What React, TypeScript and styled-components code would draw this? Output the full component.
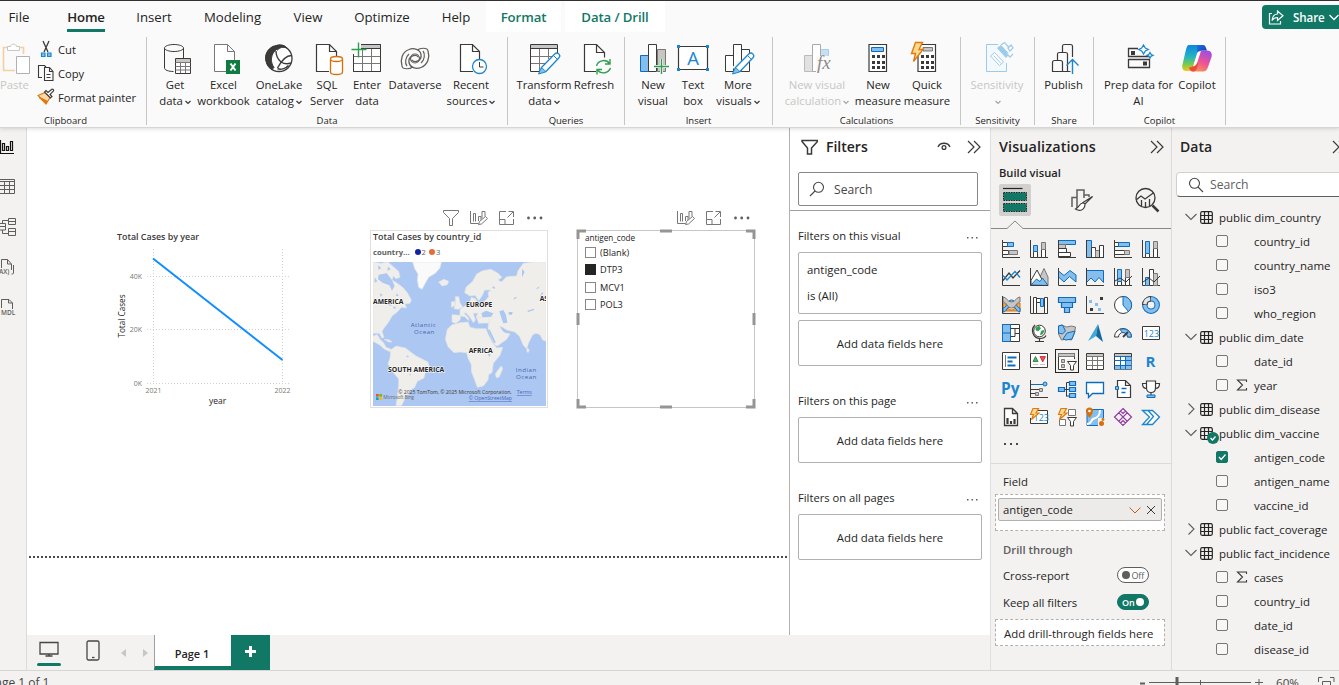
import React from "react";
import styled, { createGlobalStyle } from "styled-components";

const GREEN = "#117865";
const INK = "#252423";
const DK = "#3b3a39";
const BLUE = "#1a86d0";
const SKY = "#83beec";
const GREY = "#797775";
const LG = "#c8c6c4";

const Global = createGlobalStyle`
  *{box-sizing:border-box}
  html,body{margin:0;padding:0;overflow:hidden;background:#f3f2f1}
  body{font-family:"Open Sans","Noto Sans",sans-serif;color:${INK};font-size:11.3px}
  svg{display:block;flex:none}
`;

const App_ = styled.div`width:1339px;height:685px;overflow:hidden;display:flex;flex-direction:column;background:#f3f2f1;`;

/* ---------- top menu ---------- */
const MenuBar = styled.nav`height:33px;flex:none;border-top:1px solid #323130;background:#fafafa;display:flex;align-items:flex-start;position:relative;z-index:2;`;
const Tab = styled.div<{ $w: number; $ml?: number; $ctx?: boolean; $on?: boolean }>`
  width:${p => p.$w}px;margin-left:${p => p.$ml || 0}px;height:31px;flex:none;display:flex;justify-content:center;
  font-size:13.2px;line-height:32px;white-space:nowrap;letter-spacing:${p => (p.$ctx || p.$on ? "-0.1px" : "0")};
  font-weight:${p => (p.$ctx || p.$on ? 600 : 400)};color:${p => (p.$ctx ? GREEN : INK)};
  background:${p => (p.$ctx ? "#fff" : "transparent")};
`;
const TabText = styled.span<{ $on?: boolean }>`height:31px;border-bottom:3px solid ${p => (p.$on ? GREEN : "transparent")};`;
const ShareBtn = styled.button`
  margin:4px 0 0 auto;width:77px;height:24px;border:0;padding:0 0 0 6px;border-radius:4px 0 0 4px;background:${GREEN};color:#fff;
  display:flex;align-items:center;font:600 11.6px "Open Sans",sans-serif;
  span{margin:0 4px 0 9px;letter-spacing:-.1px}
`;

/* ---------- ribbon ---------- */
const Ribbon = styled.div`height:95px;flex:none;background:#fafafa;border-bottom:1px solid #d8d6d4;box-shadow:0 1px 4px rgba(0,0,0,.14);display:flex;padding-top:4px;position:relative;z-index:1;`;
const Group = styled.section<{ $w: number; $pl: number }>`
  width:${p => p.$w}px;flex:none;height:88px;border-right:1px solid #c8c6c4;display:flex;flex-direction:column;
  > footer{font-size:9.5px;line-height:14px;text-align:center;margin-top:auto;margin-bottom:-3px;white-space:nowrap;height:14px}
  > div{padding-left:${p => p.$pl}px}
`;
const Items = styled.div`display:flex;`;
const Big = styled.div<{ $w: number; $off?: boolean }>`
  width:${p => p.$w}px;flex:none;display:flex;flex-direction:column;align-items:center;padding-top:4px;
  color:${p => (p.$off ? "#c8c6c4" : INK)};font-size:11.3px;line-height:16px;white-space:nowrap;
  > span{display:flex;align-items:center;height:16px}
`;
const Clip = styled.div`display:flex;height:72px;`;
const PasteCol = styled.div`width:36px;color:#c8c6c4;font-size:11.3px;line-height:16px;padding-top:4px;span{display:block}`;
const ClipList = styled.div`display:flex;flex-direction:column;`;
const ClipItem = styled.div`height:24px;display:flex;align-items:center;gap:3px;white-space:nowrap;font-size:11.2px;`;

const ChevSvg = styled.svg`margin:1px -1px 0 1px;`;
const Chev = ({ c = DK }: { c?: string }) => (
  <ChevSvg width="8" height="8" viewBox="0 0 8 8"><path d="M1.500 3 4 5.400 6.500 3" fill="none" stroke={c} strokeWidth="1.300" /></ChevSvg>
);
const I36 = ({ children }: { children: React.ReactNode }) => (
  <svg width="36" height="36" viewBox="0 0 36 36" fill="none" stroke={DK} strokeWidth="1">{children}</svg>
);
const Pencil = () => <><path d="M15 27L29 12.800c2.500-2.300 6.300 1.200 4 3.900L19.500 31" fill="#fff" stroke={BLUE} strokeWidth="1.300" /><path d="M27.500 14.500l4 4" stroke={BLUE} /><path d="M12.500 33l2.500-6c2 .5 4 2 4.500 4z" fill={SKY} stroke={BLUE} /></>;

const ic = {
  get: <I36><path d="M26.500 7v10M7.500 7v20c0 2 4 3.500 9 3.500M7.500 7c0-2 4.500-3.500 9.500-3.500s9.500 1.500 9.500 3.500-4.500 3.500-9.500 3.500S7.500 9 7.500 7z" /><path d="M18.500 17.500h15v15h-15z" fill="#fff" /><path d="M19 18h14v3h-14z" fill={LG} stroke="none" /><path d="M18.500 21.500h15M18.500 25.500h15M18.500 29h15M23.500 21v11M28.500 21v11" stroke={GREY} /></I36>,
  excel: <I36><path d="M8.500 3.500h13l7 7v20h-20zM21.500 3.500v7h7" stroke={GREY} fill="#fff" /><path d="M20 19h14v14H20z" fill="#107c41" stroke="none" /><path d="M24.500 22.500l5 7M29.500 22.500l-5 7" stroke="#fff" strokeWidth="2" /></I36>,
  lake: <I36><circle cx="18" cy="17.500" r="13" strokeWidth="1.300" fill="#fff" /><path d="M13 5C6 8 3.500 14 5 20c1 4 3 7 6 8.500l2-2C9 21 9.500 13 15.500 8.500z" fill={DK} /><path d="M13 6c3-3 10-3 13 1-4-1.500-7-.5-9.500 2z" fill={DK} /><path d="M30.500 14.500c-5.500 0-9.500 4-14 12.500M30 22c-3 1-7 1-10-1-3-2.500-5-6-5-11M16.500 27.500c3 1.500 8 .5 11-3" strokeWidth="1.400" /></I36>,
  sql: <I36><path d="M20 30.500H7.500v-27h13l7 7v5M20.500 3.500v7h7" strokeWidth="1.200" fill="#fff" /><path d="M21.500 18v13c0 1.500 2.500 2.500 6 2.500s6-1 6-2.500V18" fill="#fff" stroke="#d8700a" strokeWidth="1.300" /><ellipse cx="27.500" cy="18" rx="6" ry="2.500" fill="#fff" stroke="#d8700a" strokeWidth="1.300" /></I36>,
  enter: <I36><path d="M4.500 3.500h27v27h-27z" fill="#fff" /><path d="M12 4h19v3.500H12z" fill={LG} stroke="none" /><path d="M4.500 7.500h27M4.500 15.500h27M4.500 22.500h27M13.500 8v22M22.500 8v22" stroke={GREY} /><path d="M4.500 3.500h27v27h-27zM12 7.500h19" /><path d="M2 1h10v12H2z" fill="#fafafa" stroke="none" /><path d="M2.500 8.500h15M9.500 1.500v15" stroke="#2f9e4f" strokeWidth="1.400" /></I36>,
  verse: <I36><path d="M31 10c2 6 0 14-7 16.500-5 2-11 0-12-5-1-6 6-9 9.500-5.500M5 25C3 19 5 11 12 8.500c5-2 11 0 12 5 1 6-6 9-9.500 5.500" stroke="#605e5c" strokeWidth="1.300" /><path d="M20.500 9c2-2 10-3 10.500 1M15.500 26c-2 2-10 3-10.500-1M26 10c2.500 3 1.500 9-2 12M10 25c-2.500-3-1.500-9 2-12" stroke="#605e5c" strokeWidth="1.200" /><circle cx="18" cy="17.500" r="4.500" stroke="#605e5c" strokeWidth="1.200" /></I36>,
  recent: <I36><path d="M20 30.500H7.500v-27h12l7 7v8M19.500 3.500v7h7" strokeWidth="1.200" fill="#fff" /><circle cx="26.500" cy="25.500" r="7" fill="#fff" stroke={BLUE} strokeWidth="1.300" /><path d="M26.500 21v5h4" /></I36>,
  transform: <I36><path d="M4.500 3.500h27v27h-27z" fill="#fff" stroke="none" /><path d="M5 4h26v3.500H5z" fill={LG} stroke="none" /><path d="M4.500 15.500h22M4.500 22.500h15M13.500 8v22M22.500 8v10" stroke={GREY} /><path d="M31.500 12V3.500h-27v27H14M4.500 7.500h27" /><path d="M21 30h11V18z" fill="#fafafa" stroke="none" /><Pencil /></I36>,
  refresh: <I36><path d="M20 30.500H8.500v-27h12l8 8v5M20.500 3.500v8h8" strokeWidth="1.200" fill="#fff" /><path d="M20.500 25c1-5 9-8 13-2.500M34 18v5h-5M34.500 27c-2 5-9 7-13 2M21 33.500v-5h5" stroke="#2f9e4f" strokeWidth="1.400" /></I36>,
  newv: <I36><path d="M22.500 8.500h8v22h-8z" fill={LG} stroke={GREY} /><path d="M5.500 14.500h8v16h-8z" fill={SKY} stroke="#0f6cbd" /><path d="M13.500 3.500h8v27h-8z" fill="#fff" /><path d="M19 25.500h15M26.500 18v15" stroke="#fafafa" strokeWidth="3" /><path d="M19 25.500h15M26.500 18v15" stroke="#2f9e4f" strokeWidth="1.400" /></I36>,
  text: <I36><path d="M3.500 5.500h29v23h-29z" fill="#fff" strokeWidth="1.200" /><g fill={BLUE} stroke="none"><path d="M2 4h3v3H2zM31 4h3v3h-3zM2 27h3v3H2zM31 27h3v3h-3z" /></g><text x="18" y="24" fontSize="18.500" textAnchor="middle" fill={BLUE} stroke="none">A</text></I36>,
  more: <I36><path d="M5.500 14.500h8v16h-8zM21.500 8.500h8v22h-8z" fill="#fff" /><path d="M13.500 3.500h8v27h-8z" fill="#fff" /><path d="M14 31h5M13 27l8-8" stroke="#fafafa" strokeWidth="2" /><Pencil /></I36>,
  nvc: <I36><path d="M5.500 14.500h8v16h-8z" fill="#e1e1e1" stroke="#bbb" /><path d="M21.500 8.500h8v8h-8z" fill="#c5e0f5" stroke="#a9cdea" /><path d="M13.500 3.500h8v27h-8z" fill="#fff" stroke="#aaa" /><path d="M17 15h17v17H17z" fill="#fafafa" stroke="none" /><text x="18" y="28" fontFamily="Liberation Serif" fontStyle="italic" fontSize="19" fill="#8d8b89" stroke="none">fx</text></I36>,
  calc: <I36><path d="M9 3.500h17.500v27H9z" strokeWidth="1.200" fill="#fff" /><path d="M11.500 6.500h12v4h-12z" fill={SKY} stroke="#0f6cbd" /><path d="M12 15.500h13M12 21.500h13M12 26.500h13" stroke={DK} strokeWidth="3" strokeDasharray="3 2" /></I36>,
  quick: <I36><path d="M9 3.500h17.500v27H9z" strokeWidth="1.200" fill="#fff" /><path d="M14 6.500h9.500v3.500H14z" fill={LG} stroke={GREY} /><path d="M12 15.500h13M12 21.500h13M12 26.500h13" stroke={DK} strokeWidth="3" strokeDasharray="3 2" /><path d="M3 0h10v14H3z" fill="#fafafa" stroke="none" /><path d="M6.500 1.500h7l-3.500 7h4L4.500 20.500l2-8h-4z" fill="#fcdc8c" stroke="#e07a10" strokeWidth="1.400" /></I36>,
  sens: <I36><path d="M19 3.500H7.500v27h20V22" stroke="#9fcbea" fill="#f3f9fd" /><path d="M11.500 15l4-3.500 9 9.500-4 3.500zM14.500 14.500l7.500 8" stroke="#9fcbea" fill="#fff" /><path d="M18.500 7l3.500-2.500 8 8.500-3 3.500z" fill="#9fcbea" stroke="#9fcbea" /><path d="M22 4l3.500-2.500 4 4.500M29 7l3-3 2 3-3 3zM27 12l4 4 3-3" fill="#fff" stroke="#9fcbea" strokeWidth="1.300" /></I36>,
  publish: <I36><path d="M6.500 30.500v-9c0-2 1-2 2-2h6c1 0 2 0 2 2v9zM11.500 19v-6c0-1 1-1.500 2-1.500h6c1 0 2 .5 2 1.500v17.500h-5M16.500 11V5c0-1 .5-1.500 2-1.500h6c1 0 2 .5 2 2V16M21.500 30.500h3" strokeWidth="1.200" /><path d="M26.500 33V18M20.500 24.500l6-6 6 6" stroke={BLUE} strokeWidth="1.400" /></I36>,
  prep: <I36><path d="M17 7.500H7.500v8h20v-1M7.500 18.500h21v8h-21z" strokeWidth="1.300" /><path d="M10 10h4v4h-4zM22 20.500h4v4h-4z" fill={DK} stroke="none" /><path d="M22.500 4l1.800 3 3 1.500-3 1.500-1.800 3-1.800-3-3-1.500 3-1.500zM29 11.500l1.200 2 1.800.8-1.800.8-1.200 2-1.200-2-1.800-.8 1.800-.8z" stroke={BLUE} strokeWidth="1.300" fill="#fff" /></I36>,
  copilot: (
    <I36>
      <defs>
        <linearGradient id="ca" x1="0" y1="0" x2="0" y2="1"><stop offset="0" stopColor="#0f86dc" /><stop offset=".45" stopColor="#23b4c4" /><stop offset=".75" stopColor="#7ccb4a" /><stop offset="1" stopColor="#f4c51f" /></linearGradient>
        <linearGradient id="cb" x1=".7" y1="0" x2=".2" y2="1"><stop offset="0" stopColor="#a04de0" /><stop offset=".5" stopColor="#ee5393" /><stop offset="1" stopColor="#fb9950" /></linearGradient>
        <linearGradient id="cc" x1="0" y1="0" x2="1" y2="1"><stop offset="0" stopColor="#1b6fe8" /><stop offset="1" stopColor="#1539a8" /></linearGradient>
      </defs>
      <g stroke="none">
        <path d="M10 4h13c3 0 3 3 4 5.500h-4c-3 0-4 2-5 5l-4 12c-1 2-2 3.500-4.500 3.500H7c-3 0-4.500-3-3.500-6.500L7 8.500C7.700 5.800 8.500 4 10 4z" fill="url(#ca)" />
        <path d="M18 4h6c2.500 0 3 3 4 5.500h-4.500c-3 0-4 2-5 5z" fill="url(#cc)" />
        <path d="M28 9.500c4 0 5.500 3 4.500 6.500L29 26c-1 3-2.500 4.500-5 4.500H14c-2 0-3-2-3.500-4 3 0 4-1.500 5-4.500l3-9c.8-2.500 2-3.500 5-3.500z" fill="url(#cb)" />
        <path d="M10 26.500c3 0 4.500-1.500 5.500-4.500h4l-1.500 5c-.7 2-1.500 3.500-4 3.500-2.500 0-3.500-2-4-4z" fill="#ee4b38" />
        <path d="M18 12.500c.8-1.800 2-2.500 4-2.500l-4 12c-.6 1.800-2 3-4 3.500z" fill="#fff" />
      </g>
    </I36>
  ),
};

type B = { w: number; i: React.ReactNode; a: string; b?: string; v?: boolean; off?: boolean };
const groups: { w: number; pl: number; label: string; items: B[] }[] = [
  { w: 361, pl: 8, label: "Data", items: [
    { w: 40, i: ic.get, a: "Get", b: "data", v: true }, { w: 57, i: ic.excel, a: "Excel", b: "workbook" },
    { w: 54, i: ic.lake, a: "OneLake", b: "catalog", v: true }, { w: 42, i: ic.sql, a: "SQL", b: "Server" },
    { w: 38, i: ic.enter, a: "Enter", b: "data" }, { w: 58, i: ic.verse, a: "Dataverse" }, { w: 54, i: ic.recent, a: "Recent", b: "sources", v: true }] },
  { w: 117, pl: 9, label: "Queries", items: [{ w: 54, i: ic.transform, a: "Transform", b: "data", v: true }, { w: 46, i: ic.refresh, a: "Refresh" }] },
  { w: 148, pl: 13, label: "Insert", items: [{ w: 30, i: ic.newv, a: "New", b: "visual" }, { w: 50, i: ic.text, a: "Text", b: "box" }, { w: 40, i: ic.more, a: "More", b: "visuals", v: true }] },
  { w: 188, pl: 9, label: "Calculations", items: [{ w: 70, i: ic.nvc, a: "New visual", b: "calculation", v: true, off: true }, { w: 52, i: ic.calc, a: "New", b: "measure" }, { w: 46, i: ic.quick, a: "Quick", b: "measure" }] },
  { w: 74, pl: 9, label: "Sensitivity", items: [{ w: 54, i: ic.sens, a: "Sensitivity", b: "", v: true, off: true }] },
  { w: 59, pl: 7, label: "Share", items: [{ w: 43, i: ic.publish, a: "Publish" }] },
  { w: 132, pl: 9, label: "Copilot", items: [{ w: 71, i: ic.prep, a: "Prep data for", b: "AI" }, { w: 46, i: ic.copilot, a: "Copilot" }] },
];

/* ---------- body ---------- */
const Body = styled.main`display:flex;height:542px;flex:none;`;
const Rail = styled.aside`width:27px;flex:none;border-right:1px solid #dddbd9;background:#f3f2f1;display:flex;flex-direction:column;padding-top:8px;gap:18px;`;
const Center = styled.div`width:963px;flex:none;display:flex;flex-direction:column;`;
const Upper = styled.div`height:507px;flex:none;display:flex;`;
const Canvas = styled.div`width:762px;flex:none;background:#fff;position:relative;overflow:hidden;`;
const PageEdge = styled.div`position:absolute;left:2px;right:0;top:428px;height:2px;background:repeating-linear-gradient(90deg,#4a4a4a 0 2px,transparent 2px 4px);`;
const Visual = styled.div<{ $x: number; $y: number; $w: number; $h: number; $b?: string }>`
  position:absolute;left:${p => p.$x}px;top:${p => p.$y}px;width:${p => p.$w}px;height:${p => p.$h}px;border:${p => (p.$b ? `1px solid ${p.$b}` : 0)};
`;
const Tools = styled.div<{ $x: number }>`position:absolute;left:${p => p.$x}px;top:81px;display:flex;gap:10px;`;
const VTitle = styled.div`font-size:8.900px;line-height:11px;height:13px;white-space:nowrap;padding-left:2px;font-weight:600;color:#3b3a39;`;
const Legend = styled.div`display:flex;align-items:center;height:18px;padding:0 0 2px 2px;font-size:7.700px;color:#605e5c;b{margin-right:5px;font-weight:700}`;
const Dot = styled.i<{ $c: string }>`width:6px;height:6px;border-radius:50%;background:${p => p.$c};margin:0 1px 0 0;`;
const Num = styled.span`margin-right:3px;`;
const Slicer = styled.div`padding:0 0 0 7px;font-size:9.2px;`;
const SlHead = styled.div`font-size:8.200px;line-height:13px;letter-spacing:-.05px;`;
const SlRow = styled.div`height:17.300px;display:flex;align-items:center;gap:4px;`;
const SlBox = styled.span<{ $on?: boolean }>`width:11px;height:11px;border:1px solid ${p => (p.$on ? "#252423" : "#8a8886")};background:${p => (p.$on ? "#252423" : "#fff")};`;

const PageBar = styled.div`height:35px;display:flex;align-items:stretch;background:#f3f2f1;`;
const Device = styled.div<{ $w: number }>`width:${p => p.$w}px;display:flex;flex-direction:column;align-items:center;padding-top:5px;gap:1px;i{width:24px;height:3px;margin-top:4px;border-radius:2px;background:${GREEN}}`;
const Arrows = styled.div`width:39px;display:flex;align-items:center;justify-content:center;gap:17px;`;
const PageTab = styled.div`width:77px;border-left:1px solid #a19f9d;border-bottom:4px solid ${GREEN};background:#fff;font-weight:600;font-size:11px;text-align:center;line-height:37px;padding-right:2px;letter-spacing:0;height:35px;`;
const AddPage = styled.div`width:39px;background:${GREEN};display:flex;align-items:center;justify-content:center;padding-bottom:2px;`;

/* ---------- filters ---------- */
const Filters = styled.aside`width:201px;flex:none;background:#fff;border-left:1px solid #b3b0ad;`;
const PaneHead = styled.header`height:37px;display:flex;align-items:center;font-weight:600;font-size:14px;`;
const FHead = styled(PaneHead)`padding-left:11px;span{margin-left:8px;width:111px}svg:last-child{margin-left:16px}`;
const FTop = styled.div`height:83px;border-bottom:1px solid #a19f9d;`;
const Search = styled.div`margin:7px 0 0 8px;width:180px;height:34px;border:1px solid #8a8886;border-radius:2px;display:flex;align-items:center;padding-left:10px;gap:9px;font-size:12.1px;color:#484644;`;
const FSec = styled.div<{ $mt: number }>`margin-top:${p => p.$mt}px;padding:0 8px;`;
const FTitle = styled.div`height:32px;display:flex;align-items:center;justify-content:space-between;font-size:11.200px;padding:0 4px 1px 0;svg{margin-top:4px}`;
const Card = styled.div<{ $h: number }>`width:184px;height:${p => p.$h}px;border:1px solid #b3b0ad;border-radius:2px;margin-bottom:6px;display:flex;align-items:center;justify-content:center;font-size:11.400px;`;
const CardField = styled(Card)`flex-direction:column;align-items:flex-start;padding-left:8px;line-height:26px;`;

/* ---------- visualizations ---------- */
const Viz = styled.aside`width:182px;flex:none;border-left:1px solid #e1dfdd;border-right:1px solid #dddbd9;background:#f3f2f1;`;
const VHead = styled(PaneHead)`padding:0 7px 0 8px;justify-content:space-between;font-size:14.400px;letter-spacing:.1px;`;
const Sub = styled.div`font-weight:600;font-size:11.200px;line-height:16px;padding-left:8px;`;
const Modes = styled.div`display:flex;align-items:center;height:32px;margin-top:3px;padding-left:8px;`;
const Mode = styled.div<{ $on?: boolean; $ml?: number }>`width:32px;height:32px;margin-left:${p => p.$ml || 0}px;border-radius:2px;background:${p => (p.$on ? "#d2d0ce" : "none")};display:flex;align-items:center;justify-content:center;`;
const Grid = styled.div`display:grid;grid-template-columns:repeat(6,20px);gap:8px;padding:10px 0 0 10px;`;
const Cell = styled.div<{ $on?: boolean }>`width:20px;height:20px;outline:${p => (p.$on ? "1px solid #252423" : "none")};outline-offset:1px;`;
const Dots = styled.div`display:flex;gap:4px;margin-top:8px;padding:8px 0 0 13px;height:29px;border-bottom:1px solid #dddbd9;i{width:2px;height:2px;background:#484644}`;
const Field = styled.div<{ $h: number; $mt?: number; $pt?: number; $bold?: boolean }>`height:${p => p.$h}px;margin-top:${p => p.$mt || 0}px;display:flex;align-items:center;justify-content:space-between;padding:${p => p.$pt || 0}px 22px 0 12px;font-size:11.300px;font-weight:${p => (p.$bold ? 600 : 400)};color:${p => (p.$bold ? "#605e5c" : INK)};`;
const Well = styled.div<{ $h: number }>`width:170px;height:${p => p.$h}px;margin-left:4px;border:1px dashed #b3b0ad;background:#fff;padding:3px 2px;font-size:11.400px;`;
const Chip = styled.div`height:23px;width:164px;border:1px solid #b3b0ad;background:#edebe9;border-radius:2px;display:flex;align-items:center;padding-left:4px;font-size:11.300px;span{width:128px}svg{margin-right:5px}`;
const DropHint = styled(Well)`display:flex;align-items:center;padding:1px 0 0 8px;white-space:nowrap;`;
const Toggle = styled.span<{ $on?: boolean }>`
  width:32px;height:16px;border-radius:8px;border:1px solid ${p => (p.$on ? GREEN : "#605e5c")};background:${p => (p.$on ? GREEN : "#fff")};
  color:${p => (p.$on ? "#fff" : "#605e5c")};font-size:9px;display:flex;flex-direction:${p => (p.$on ? "row-reverse" : "row")};align-items:center;gap:2px;padding:0 4px;letter-spacing:-.2px;
  font-weight:${p => (p.$on ? 600 : 400)};
  i{width:8px;height:8px;border-radius:50%;background:${p => (p.$on ? "#fff" : "#605e5c")}}
`;

/* ---------- data ---------- */
const Data = styled.aside`width:167px;flex:none;overflow:hidden;`;
const DHead = styled(PaneHead)`padding-left:8px;span{width:152px;flex:none}`;
const DSearch = styled.div`margin:7px 0 0 4px;width:180px;height:25px;border:1px solid #d2d0ce;border-bottom-color:#605e5c;border-radius:4px;background:#fff;display:flex;align-items:center;gap:6px;padding-left:11px;font-size:12.200px;color:#605e5c;`;
const Tree = styled.div`padding-top:8px;`;
const TableRow = styled.div`height:24px;display:flex;align-items:center;padding-left:12px;font-size:11.480px;white-space:nowrap;position:relative;span{margin-left:6px}svg+svg{margin-left:2px}`;
const ColRow = styled.div`height:24px;display:flex;align-items:center;padding-left:44px;font-size:11.480px;white-space:nowrap;`;
const Box = styled.span<{ $on?: boolean }>`width:12px;height:12px;border:1px solid ${p => (p.$on ? GREEN : "#797775")};border-radius:2px;background:${p => (p.$on ? GREEN : "#f8f7f6")};flex:none;margin-top:-1px;`;
const Sig = styled.span`width:26px;display:flex;padding-left:8px;`;
const Mark = styled.i`position:absolute;left:35px;top:11px;width:12px;height:12px;`;

/* ---------- status ---------- */
const Status = styled.footer`height:15px;flex:none;border-top:1px solid #d8d6d4;display:flex;font-size:11.600px;line-height:16px;color:#484644;overflow:hidden;white-space:nowrap;padding-top:4px;`;
const PageNo = styled.span`margin-left:-12px;width:1151px;font-size:12px;`;
const Pct = styled.span`margin-left:11px;width:42px;`;

const Dbl = () => <svg width="14" height="14" viewBox="0 0 14 14" fill="none" stroke={DK} strokeWidth="1.200"><path d="M1 1l6 6-6 6M7 1l6 6-6 6" /></svg>;
const Lens = ({ flip }: { flip?: boolean }) => (
  <svg width="16" height="16" viewBox="0 0 16 16" fill="none" stroke="#484644" strokeWidth="1.100"><g transform={flip ? "translate(16 0) scale(-1 1)" : ""}><circle cx="6.500" cy="6.300" r="5" /><path d="M10 10l5 5" /></g></svg>
);
const Ell = () => <svg width="12" height="4" viewBox="0 0 12 4" fill="#605e5c"><path d="M1 1h1.500v1.500H1zM5.500 1H7v1.500H5.500zM10 1h1.500v1.500H10z" /></svg>;

const I18 = ({ children }: { children: React.ReactNode }) => <svg width="18" height="18" viewBox="0 0 18 18" fill="none" stroke="#797775" strokeWidth="1">{children}</svg>;
const FunnelIc = () => <I18><path d="M1.500 1.500h15v2l-6 6v7h-3v-7l-6-6z" /></I18>;
const PersonIc = () => <I18><path d="M.5 2v12.500h8M3.500 4.500v8M5.500 4.500v8M3.500 4.500h2M8.500 12V7.500h2.500V11M12 9.500V2.500h3v5" /><path d="M8.500 15.500l1-3 6-5 2 2-6 5.500z" fill="#fff" /></I18>;
const FocusIc = () => <I18><path d="M8 2.500H1.500v13h14V10M10.500 2.500h5V8M15 3l-5.500 5.500M1.500 10.500H7v5" /></I18>;
const DotsIc = () => <svg width="18" height="18" viewBox="0 0 18 18" fill="#605e5c"><circle cx="2.500" cy="9" r="1.400" /><circle cx="8.700" cy="9" r="1.400" /><circle cx="15" cy="9" r="1.400" /></svg>;

const LineChart = () => (
  <svg width="190" height="180" viewBox="110 230 190 180" fontFamily="Open Sans">
    <text x="117" y="240" fontSize="8.900" fill="#3b3a39" fontWeight="600">Total Cases by year</text>
    <g stroke="#d2d0ce" strokeDasharray="1 2"><path d="M147 276.500H289M147 329.500H289M147 383.500H289M153.500 249V383M282.500 249V383" fill="none" /></g>
    <path d="M153 258.500L282.500 360" stroke="#118dff" strokeWidth="2" />
    <g fontSize="7" fill="#797775"><text x="142" y="279" textAnchor="end">40K</text><text x="142" y="332" textAnchor="end">20K</text><text x="142" y="386" textAnchor="end">0K</text><text x="153.500" y="393" textAnchor="middle">2021</text><text x="282.500" y="393" textAnchor="middle">2022</text></g>
    <text x="217.500" y="404" fontSize="8.500" textAnchor="middle" fill="#252423">year</text>
    <text transform="translate(125 316) rotate(-90)" fontSize="8.200" textAnchor="middle" fill="#252423">Total Cases</text>
  </svg>
);

const MapSvg = styled.svg`margin-left:2px;`;
const MapView = () => (
  <MapSvg width="173" height="144" viewBox="39 186 519 432" fontFamily="Open Sans">
    <path d="M39 186h519v432H39z" fill="#abc7f2" />
    <g fill="#f0eeea" stroke="#e2e4e6" strokeWidth="2">
      <path d="M39 186L62 190 84 186 100 200 116 214 120 232 108 236 100 228 96 240 112 250 128 262 142 278 154 300 150 310 134 312 140 324 124 322 112 336 96 348 86 366 74 382 66 394 72 412 66 414 58 400 39 400z" />
      <path d="M39 408L52 404 60 418 72 430 78 442 94 448 92 456 74 448 58 434 39 424zM72 418l16 2 8 6-10 0z" />
      <path d="M92 450L108 438 136 444 152 456 168 468 180 474 204 486 208 500 196 516 192 534 172 544 164 562 150 572 146 584 136 588 132 602 124 617 108 617 112 590 116 556 116 536 98 516 84 492 90 474z" />
      <path d="M158 186L244 186 240 204 226 220 206 232 196 250 186 268 176 262 172 240 174 222 164 206z" fill="#fafafa" />
      <path d="M236 246l16-8 14 6-4 10-16 4z" />
      <path d="M286 290l10 0 4 18 8 14-14 6-12-2 4-14zM274 306l10-2 2 12-12 6z" />
      <path d="M262 388L276 374 300 368 324 366 330 382 350 386 378 386 384 402 398 428 410 444 428 442 420 466 400 490 396 518 386 524 384 540 370 558 352 562 344 540 334 514 334 494 324 474 320 458 300 456 282 458 264 440 256 418z" />
      <path d="M424 498l4 8-10 24-8 4-4-12 8-12z" />
      <path d="M276 366L276 344 300 346 300 328 318 316 330 306 334 292 346 296 352 306 372 306 386 290 384 278 392 270 374 270 366 288 356 302 346 286 330 288 314 278 318 262 338 244 350 222 368 212 392 208 412 218 426 232 414 240 424 246 440 230 470 228 474 212 490 190 520 186 558 186V424L548 420 540 404 528 400 518 404 506 428 500 446 490 436 478 408 464 396 440 390 428 382 418 378 430 396 450 402 440 418 412 438 404 434 392 404 384 386 386 370 360 366 348 352 354 340 340 340 346 360 340 368 330 352 318 338 312 340 326 354 326 362 314 350 302 348 300 360 288 370z" />
      <path d="M502 444l6 6-4 8-4-6zM350 352h34l6 16-34 2z" />
    </g>
    <g fill="#abc7f2">
      <path d="M56 224l24-4 16 20 8 18-8 14-8-16-20-8-14-10z" />
      <path d="M364 340l14-8 22 8-6 10-26 2zM418 334l12-4 8 14 4 24-12 2-6-16zM446 336h12l-2 8h-10zM384 388l6 2 18 38-6 0zM426 384l12 8 8 6-10 0z" />
      <path d="M74 306l14 4 8 8-14-4zM98 320l10 0-4 8zM384 462l8 0-4 10zM396 264l6-6 4 8zM502 332l20-6 0 4-18 6zM526 268l10-8 2 4z" />
      <path d="M54 196l10 8-8 6zM84 200l8 8-10 4zM486 206l8 10-8 16zM460 300l4-8 8 0zM540 290l6-14 4 4zM44 232l8 12-8 4zM60 280l8 4-6 6zM110 280l6 8-8 0zM140 466l8 4-8 2zM130 500l3 8-5 0zM150 520l3 6-5 0z" />
    </g>
    <g fontWeight="700" fontSize="20" fill="#252423" stroke="#fff" strokeWidth="3" paintOrder="stroke">
      <text x="39" y="311" textLength="91" lengthAdjust="spacingAndGlyphs">AMERICA</text>
      <text x="318" y="322" textLength="79" lengthAdjust="spacingAndGlyphs">EUROPE</text>
      <text x="326" y="458" textLength="72" lengthAdjust="spacingAndGlyphs">AFRICA</text>
      <text x="84" y="515" textLength="169" lengthAdjust="spacingAndGlyphs">SOUTH AMERICA</text>
      <text x="539" y="304">AS</text>
    </g>
    <g fontSize="18.500" fill="#4668b0" letterSpacing="1.500"><text x="152" y="381">Atlantic</text><text x="162" y="402">Ocean</text><text x="467" y="516">Indian</text><text x="468" y="537">Ocean</text></g>
    <g fontSize="15.500" fill="#3b3a39"><text x="115" y="582" textLength="340">© 2025 TomTom, © 2025 Microsoft Corporation,</text><text x="470" y="582" fill="#4a68b8" textDecoration="underline">Terms</text><text x="326" y="601" fill="#4a68b8" textDecoration="underline" textLength="130">© OpenStreetMap</text><text x="70" y="596" fill="#6b6b6b" fontSize="15" textLength="92">Microsoft Bing</text></g>
    <path d="M48 582h8v8h-8z" fill="#f25022" /><path d="M58 582h8v8h-8z" fill="#7fba00" /><path d="M48 592h8v8h-8z" fill="#00a4ef" /><path d="M58 592h8v8h-8z" fill="#ffb900" />
  </MapSvg>
);

const HandleSvg = styled.svg`position:absolute;left:-2px;top:-2px;`;
const Handles = () => (
  <HandleSvg width="180" height="180" viewBox="0 0 180 180" fill="none" stroke="#979593" strokeWidth="3">
    <path d="M10 2H2v8M170 2h8v8M10 178H2v-8M170 178h8v-8M84 2h12M84 178h12M2 84v12M178 84v12" />
  </HandleSvg>
);

/* gallery glyphs, drawn on a 20x20 grid */
const AX = <path d="M1.500 1v17.500H19" />;
const P = ({ d, f = "#fff", s = "#3b3a39", w = 1 }: { d: string; f?: string; s?: string; w?: number }) => <path d={d} fill={f} stroke={s} strokeWidth={w} />;
const BL = "#0f6cbd";
const bolt = <P d="M4 1.500h5.500L7 6h3L2.500 12.500l2-5H1.500z" f="#fcdc8c" s="#e07a10" w={1.200} />;
const gallery: React.ReactNode[] = [
  <>{AX}<P d="M1.500 3.500h6v4h-6zM1.500 11.500h6v4h-6z" /><P d="M6.500 3.500h6v4h-6z" f={SKY} s={BL} /><P d="M8 11.500h8.500v4H8z" f={LG} s={GREY} /></>,
  <>{AX}<P d="M4.500 12.500h4v6h-4zM12.500 10.500h4v8h-4z" /><P d="M4.500 6.500h4v6h-4z" f={SKY} s={BL} /><P d="M12.500 3.500h4v7h-4z" f={LG} s={GREY} /></>,
  <><P d="M1.500 1.500h17v4h-17z" f={SKY} s={BL} /><P d="M1.500 5.500h7v4h-7z" f={LG} s={GREY} /><P d="M1.500 9.500h8v4h-8zM1.500 13.500h12v4h-12z" />{AX}</>,
  <><P d="M1.500 1.500h5v17h-5z" f={SKY} s={BL} /><P d="M6.500 8.500h4v10h-4z" f="#fff" /><P d="M10.500 11.500h4v7h-4z" f={LG} s={GREY} /><P d="M14.500 6.500h4v12h-4z" />{AX}</>,
  <>{AX}<P d="M1.500 3.500h5v4h-5zM1.500 11.500h10v4h-10z" /><P d="M5.500 3.500h11v4h-11z" f={SKY} s={BL} /><P d="M11.500 11.500h5v4h-5z" f={LG} s={GREY} /></>,
  <>{AX}<P d="M4.500 14.500h4v4h-4zM12.500 9.500h4v9h-4z" /><P d="M4.500 2.500h4v12h-4z" f={SKY} s={BL} /><P d="M12.500 2.500h4v7h-4z" f={LG} s={GREY} /></>,
  <>{AX}<P d="M2 13.500L8 6l4 5 7-7.500" f="none" w={1.300} /><P d="M2 8.500l4 4.500 8-8.500 5 6" f="none" s={BLUE} w={1.300} /></>,
  <><P d="M10 12l5-10.500L19 10v8.500z" f={LG} s={GREY} /><P d="M2 13.500L8 3l8 15.500H2z" f="#fff" /><P d="M2 18l5.500-6 3.500 2.500 2.500-3.500 5.500 7.500z" f={SKY} s={BL} />{AX}</>,
  <><P d="M1.500 4l5.500 4.500L13 3.500l6 4.500v7l-6.500-5.500L7 15l-5.500-5z" f={SKY} s={BL} />{AX}</>,
  <><P d="M1.500 3.500h17v12L14 10.500 10 15l-4-4-4.500 4.500z" f={SKY} s={BL} />{AX}</>,
  <>{AX}<P d="M4.500 14.500h4v4h-4zM12.500 10.500h4v8h-4z" /><P d="M4.500 2.500h4v12h-4z" f={SKY} s={BL} /><P d="M12.500 2.500h4v8h-4z" f={LG} s={GREY} /><P d="M2 14l5-3 6 4 6-6" f="none" /></>,
  <>{AX}<P d="M4.500 10.500h4v8h-4z" f={SKY} s={BL} /><P d="M8.500 2.500h4v16h-4z" /><P d="M12.500 6.500h4v12h-4z" f={LG} s={GREY} /><P d="M2 15l6-4 5 4 6-6" f="none" /></>,
  <><P d="M2 8c5 0 4 7 8.500 7S14 8 19 8v8H2z" f="#f8a54f" s="#d8700a" /><P d="M2 13c4 0 4-8 8.500-8S15 13 19 13v4c-4 0-4-6-8.500-6S6 17 2 17z" f={SKY} s={BL} /><P d="M2 2c4 0 4 5 8.500 5S15 2 19 2v5c-4 0-4 6-8.500 6S6 7 2 7z" f={LG} s={GREY} />{AX}</>,
  <>{AX}<P d="M4.500 2.500h3v16h-3zM7.500 3.500h4v4h-4zM15.500 2.500h3v16h-3z" /><P d="M11.500 3.500h3v8h-3z" f={SKY} s={BL} /></>,
  <><P d="M1.500 2.500h17v5h-17zM4.500 7.500h11v5h-11zM7.500 12.500h5v5h-5z" f={SKY} s={BL} w={1.200} /></>,
  <>{AX}<path d="M5 13h3v3H5zM15 2h3v3h-3z" fill={DK} stroke="none" /><path d="M4 5h3v3H4zM10 8h3v3h-3zM13 13h3v3h-3z" fill={SKY} stroke="none" /></>,
  <><circle cx="10" cy="10" r="8.500" fill="#fff" /><P d="M10 1.500a8.500 8.500 0 0 1 5.500 15L10 10z" f={SKY} s={BL} /></>,
  <><circle cx="10" cy="10" r="6.200" stroke={BL} strokeWidth="5.500" /><circle cx="10" cy="10" r="6.200" stroke={SKY} strokeWidth="3.500" /><path d="M3.800 10A6.200 6.200 0 0 1 10 3.800" stroke={DK} strokeWidth="5.500" /><path d="M3.800 9.200A6.200 6.200 0 0 1 9.200 3.800" stroke="#e6e4e2" strokeWidth="3.500" /></>,
  <><P d="M1.500 1.500h17v17h-17z" /><P d="M1.500 1.500h8v17h-8zM1.500 10h8" f={SKY} s={BL} /><P d="M9.500 5.500h9M14 5.500v8M9.500 13.500h4.500M14 10.500h4.500" f="none" /></>,
  <><circle cx="10.500" cy="8" r="5.800" fill="#fff" /><path d="M7 5l3-2 1.500 2.500L9 8 7 7zM12.500 8l2.500-.5-1.500 3.500-2 .5z" fill="#2f9e4f" stroke="#2f9e4f" strokeWidth=".8" /><P d="M6 2C1 7 4 15 11 15.500c3 0 5-1 6-3M10.500 15.500v3M6 18.500h9" f="none" w={1.200} /></>,
  <><P d="M1.500 3l3-1 5 2 5-1 4 1-1 6-3 7-5-1-5 1-3-6z" f={LG} s={GREY} /><P d="M1.500 3l4-1 3 6-3 3-4-1zM10 10l8-2-3 8-6 1-3-1z" f={SKY} s={BL} /></>,
  <><path d="M13 1L3 18l8-5z" fill="#3fa9d8" stroke="none" /><path d="M13 1l5 18-7-6z" fill="#1666a0" stroke="none" /></>,
  <><P d="M1.500 14a8.500 8.500 0 0 1 17 0h-4a4.500 4.500 0 0 0-9 0z" f="#fff" /><P d="M7 6.500a8.500 8.500 0 0 1 11.500 7.500h-4a4.500 4.500 0 0 0-5-4.500z" f={SKY} s={BL} /><path d="M15 9l-5 5" strokeWidth="1.800" /></>,
  <><P d="M1.500 3.500h17v13h-17z" /><text x="2.700" y="13.500" fontSize="9" fill={BLUE} stroke="none">123</text></>,
  <><P d="M1.500 1.500h17v17h-17z" /><path d="M4.500 4v12" stroke={GREY} /><path d="M6.500 6.500h9M6.500 10.500h5M6.500 14.500h8" stroke={BL} strokeWidth="1.800" /></>,
  <><P d="M1.500 2.500h17v14h-17z" /><path d="M4 10.500L6.500 5.500l2.500 5z" fill="#4db266" stroke="#1e7b3a" strokeWidth=".8" /><path d="M11 5.500h5.500L13.700 11z" fill="#e8505a" stroke="#c4262e" strokeWidth=".8" /><path d="M4 13.500h5M11 13.500h5" stroke={LG} /></>,
  <><P d="M1.500 2.500h16v16h-16z" /><P d="M1.500 2.500h16v3h-16z" f={LG} s={GREY} /><P d="M4.500 8.500h3v3h-3zM4.500 13.500h3v3h-3z" f={LG} s={GREY} /><path d="M9 8h11v12H9z" fill="#f3f2f1" stroke="none" /><P d="M10.500 10.500h9l-3 4v4.500h-3v-4.500z" /></>,
  <><P d="M1.500 2.500h17v16h-17z" /><path d="M2 3h16v2.500H2z" fill={LG} stroke="none" /><path d="M1.500 5.500h17M1.500 9.500h17M1.500 14.500h17M7.500 6v12M12.500 6v12" stroke={GREY} /></>,
  <><P d="M1.500 2.500h17v16h-17z" /><path d="M2 3h16v2.500H2z" fill={LG} stroke="none" /><path d="M13 6h5.500v12.500H2V14h11z" fill={SKY} stroke="none" /><path d="M1.500 5.500h17M1.500 9.500h17M1.500 14.500h17M7.500 6v12M12.500 6v12" stroke={BL} /></>,
  <text x="4.500" y="15.500" fontSize="15" fontWeight="700" fill={BLUE} stroke="none">R</text>,
  <text x="0" y="15" fontSize="15.500" fontWeight="700" fill={BLUE} stroke="none">Py</text>,
  <>{AX}<path d="M2 5.500h12" stroke={BL} /><circle cx="16" cy="5" r="2" fill={SKY} stroke={BL} /><path d="M2 10.500h8M2 14.500h4" /><P d="M10.500 9.500h3v3h-3zM6.500 13.500h3v3h-3z" f={LG} s={GREY} /></>,
  <><path d="M7 10.500h5M9.500 3.500v14M9.500 3.500h3M9.500 17h3" /><P d="M1.500 8.500h6v4h-6zM12.500 2.500h6v4h-6zM12.500 8.500h6v4h-6zM12.500 14.500h6v4h-6z" f={SKY} s={BL} w={1.200} /></>,
  <P d="M1.500 3.500h17v11h-11l-4 4v-4h-2z" s={BL} w={1.300} />,
  <><P d="M4.500 1.500h8l5 5v12h-13zM12.500 1.500v5h5" w={1.200} /><path d="M2.500 7.500h3v3h-3z" fill={SKY} stroke={BL} /><path d="M8.500 9.500h5M8.500 13.500h4" stroke={BL} strokeWidth="1.300" /></>,
  <><P d="M5.500 2h9v7c0 3-2 4.500-4.500 4.500S5.500 12 5.500 9zM5 4.500H1.500c0 4 2 5 4 5M15 4.500h3.500c0 4-2 5-4 5M10 13.500v3" w={1.200} /><P d="M6 16h8v2.500H6z" f={SKY} s={BL} /></>,
  <><P d="M3.500 1.500h8l5 5v12h-13zM11.500 1.500v5h5" w={1.300} /><path d="M6.500 11v6M10 14v3M13.500 12v5" strokeWidth="2.200" /></>,
  <><P d="M6 3.500h12.500v13H1.500V11" /><text x="4.500" y="14" fontSize="9" fill={BLUE} stroke="none">123</text>{bolt}</>,
  <><P d="M11.500 2.500h7v6h-7zM2.500 12.500h6v6h-6z" s={GREY} />{bolt}<P d="M10.500 10.500h9l-3 4v4.500h-3v-4.500z" /></>,
  <><P d="M2 2.500h16.500V11L13 18.500H2z" f={SKY} s={BL} /><path d="M2 17c5 0 4-4 6-5s7-1 7-9" stroke="#fff" strokeWidth="2" /><path d="M13 11h7v8h-7z" fill="#f3f2f1" stroke="none" /><path d="M4.500.500A3.500 3.500 0 0 0 1 4c0 2.500 3.500 7 3.500 7S8 6.500 8 4A3.500 3.500 0 0 0 4.500.500z" fill="#d8700a" stroke="none" /><circle cx="4.500" cy="4" r="1.300" fill="#fff" stroke="none" /><circle cx="18" cy="12.500" r="1.400" fill="#d8700a" stroke="none" /><circle cx="16.500" cy="16.500" r="2.500" fill="#d8700a" stroke="none" /></>,
  <path d="M10 1.500l8.500 8.500-8.500 8.500L1.500 10zM5.800 5.800L10 10l4.200-4.200M5.800 14.200L10 10l4.200 4.200M7.500 4l2.500 2.500L12.500 4M7.500 16l2.500-2.500 2.500 2.500" stroke="#8e3a9d" strokeWidth="1.200" />,
  <path d="M1.500 3.500h10l7 6.500-7 7.500h-10l7-7.500zM7 3.500l5.500 6L5.500 17.500" stroke={BLUE} strokeWidth="1.300" fill="#fff" />,
];

const TableIcon = () => <svg width="13" height="13" viewBox="0 0 13 13" fill="none" stroke="#252423" strokeWidth="1.200"><rect x=".7" y=".7" width="11.600" height="11.600" rx="1.500" /><path d="M1 4.500h11M1 8.500h11M4.500 1v11M8.500 1v11" /></svg>;
const TreeChev = ({ open }: { open: boolean }) => <svg width="14" height="14" viewBox="0 0 14 14" fill="none" stroke="#605e5c" strokeWidth="1.100">{open ? <path d="M1.500 4l5.500 5.500L12.500 4" /> : <path d="M4.500 1.500L10 7l-5.500 5.500" />}</svg>;
const Sigma = () => <svg width="12" height="12" viewBox="0 0 12 12" fill="none" stroke={DK} strokeWidth="1.100"><path d="M10.500 3V1H1.500l5 5-5 5h9V9" /></svg>;

const tree: { n: string; open: boolean; mark?: boolean; cols: { n: string; s?: boolean; on?: boolean }[] }[] = [
  { n: "public dim_country", open: true, cols: [{ n: "country_id" }, { n: "country_name" }, { n: "iso3" }, { n: "who_region" }] },
  { n: "public dim_date", open: true, cols: [{ n: "date_id" }, { n: "year", s: true }] },
  { n: "public dim_disease", open: false, cols: [] },
  { n: "public dim_vaccine", open: true, mark: true, cols: [{ n: "antigen_code", on: true }, { n: "antigen_name" }, { n: "vaccine_id" }] },
  { n: "public fact_coverage", open: false, cols: [] },
  { n: "public fact_incidence", open: true, cols: [{ n: "cases", s: true }, { n: "country_id" }, { n: "date_id" }, { n: "disease_id" }] },
];

const RailSvg = styled.svg`margin-left:-5px;`;
const RailIc = ({ children }: { children: React.ReactNode }) => <RailSvg width="22" height="22" viewBox="0 0 22 22" fill="none" stroke="#605e5c" strokeWidth="1">{children}</RailSvg>;

const ClipFoot = styled.footer`padding-right:15px;`;

export default function App() {
  return (
    <App_>
      <Global />
      <MenuBar>
        <Tab $w={38}><TabText>File</TabText></Tab>
        <Tab $w={70} $ml={13} $on><TabText $on>Home</TabText></Tab>
        <Tab $w={66}><TabText>Insert</TabText></Tab>
        <Tab $w={91}><TabText>Modeling</TabText></Tab>
        <Tab $w={60}><TabText>View</TabText></Tab>
        <Tab $w={88}><TabText>Optimize</TabText></Tab>
        <Tab $w={60}><TabText>Help</TabText></Tab>
        <Tab $w={75} $ctx><TabText>Format</TabText></Tab>
        <Tab $w={100} $ml={4} $ctx><TabText>Data / Drill</TabText></Tab>
        <ShareBtn>
          <svg width="16" height="15" viewBox="0 0 16 15" fill="none" stroke="#fff" strokeWidth="1.200"><path d="M4 3.500H1.500v10.500h11v-3M9.500 1v3C6 4 4.500 6.500 4 10.500 5.500 8 7 7.500 9.500 7.500v3L15 5.700z" /></svg>
          <span>Share</span>
          <svg width="10" height="8" viewBox="0 0 10 8" fill="none" stroke="#fff" strokeWidth="1.300"><path d="M.5 2L5 6.500 9.500 2" /></svg>
        </ShareBtn>
      </MenuBar>

      <Ribbon>
        <Group $w={147} $pl={0}>
          <Clip>
            <PasteCol>
              <svg width="36" height="36" viewBox="0 0 36 36" fill="none"><path d="M8 6.500H3.500v23H15M20 6.500h3.500V13" stroke="#f5cfa0" strokeWidth="1.600" /><path d="M7.500 9.500v-4h3c0-3 6-3 6 0h3v4z" stroke="#c8c6c4" fill="#fff" /><path d="M16.500 15.500h13v17h-13z" stroke="#b3b0ad" fill="#fff" /></svg>
              <span>Paste</span>
            </PasteCol>
            <ClipList>
              <ClipItem><svg width="19" height="18" viewBox="0 0 19 18" fill="none" stroke={DK}><path d="M7 1l5 11M13 1L8 12" strokeWidth="1.300" /><path d="M5.500 13H9v3.500H5.500zM11.500 13H15v3.500h-3.500z" stroke={BLUE} fill={SKY} strokeWidth="1.200" /></svg>Cut</ClipItem>
              <ClipItem><svg width="19" height="18" viewBox="0 0 19 18" fill="none" stroke={DK} strokeWidth="1.100"><path d="M6 13.500H2.500v-12h6l1.500 1.500M8.500 3.500h5l3.500 4v9H8.500zM13.500 3.500v4H17M10.500 10.500h4M10.500 13.500h4" /></svg>Copy</ClipItem>
              <ClipItem><svg width="19" height="18" viewBox="0 0 19 18" fill="none" stroke={DK} strokeWidth="1.100"><path d="M2 7.500l7-3 5 5-4 6.500z" stroke="#e07a10" fill="#fcd9a8" /><path d="M3 8.500l9 4.500-2 3-7-6z" fill="#e07a10" stroke="none" /><path d="M8.500 4l6 6 1.500-1.500-2-2 3.500-3.500c.8-1-1-2.500-2-1.500L12 4.500l-2-2z" fill="#fff" /></svg>Format painter</ClipItem>
            </ClipList>
          </Clip>
          <ClipFoot>Clipboard</ClipFoot>
        </Group>
        {groups.map(g => (
          <Group key={g.label} $w={g.w} $pl={g.pl}>
            <Items>
              {g.items.map((b, i) => (
                <Big key={i} $w={b.w} $off={b.off}>
                  {b.i}
                  <span>{b.a}</span>
                  {b.b !== undefined && <span>{b.b}{b.v && <Chev c={b.off ? "#a9a7a5" : DK} />}</span>}
                </Big>
              ))}
            </Items>
            <footer>{g.label}</footer>
          </Group>
        ))}
      </Ribbon>

      <Body>
        <Rail>
          <RailIc><g stroke="#111" strokeWidth="1.200"><path d="M5.500 4v13.500H19M7.500 7.500h2v7h-2zM11.500 10.500h2v4h-2zM15.500 5.500h2v9h-2z" /></g></RailIc>
          <RailIc><path d="M2 3.500h17.500v14H2zM2 5.500h17.500M2 9.500h17.500M2 13.500h17.500M9.500 5.500V17M14.500 5.500V17" /></RailIc>
          <RailIc><path d="M13.500 2.500h7v6h-7zM13.500 5.500h7M13.500 12.500h7v7h-7zM13.500 15.500h7M3 7.500h7.500v6.500H3zM3 10.500h7.500M7.500 7V4.500h6M7.500 14v3.500h6" /></RailIc>
          <RailIc><path d="M6.500 12V3.500h6L16.500 8v6M12.500 3.500V8H16M18.500 9v8c0 1-1 1-2 1" /><text x="4" y="17.500" fontSize="6.500" fontWeight="600" fill="#605e5c" stroke="none">AX)</text></RailIc>
          <RailIc><path d="M6.500 12V3.500h7.500L17.500 7v6M13.500 3.500V7h4" /><text x="6" y="18.500" fontSize="6.500" fontWeight="600" fill="#605e5c" stroke="none">MDL</text></RailIc>
        </Rail>

        <Center>
          <Upper>
            <Canvas>
              <Visual $x={83} $y={102} $w={190} $h={180}><LineChart /></Visual>
              <Tools $x={415}><FunnelIc /><PersonIc /><FocusIc /><DotsIc /></Tools>
              <Visual $x={343} $y={102} $w={178} $h={178} $b="#e1dfdd">
                <VTitle>Total Cases by country_id</VTitle>
                <Legend><b>country...</b><Dot $c="#12239e" /><Num>2</Num><Dot $c="#e66c37" /><Num>3</Num></Legend>
                <MapView />
              </Visual>
              <Tools $x={650}><PersonIc /><FocusIc /><DotsIc /></Tools>
              <Visual $x={550} $y={102} $w={178} $h={178} $b="#c8c6c4">
                <Slicer>
                  <SlHead>antigen_code</SlHead>
                  <SlRow><SlBox />(Blank)</SlRow>
                  <SlRow><SlBox $on />DTP3</SlRow>
                  <SlRow><SlBox />MCV1</SlRow>
                  <SlRow><SlBox />POL3</SlRow>
                </Slicer>
                <Handles />
              </Visual>
              <PageEdge />
            </Canvas>
            <Filters>
              <FTop>
                <FHead>
                  <svg width="17" height="16" viewBox="0 0 17 16" fill="none" stroke={DK} strokeWidth="1.500"><path d="M1 1.500h15.500v1L10.500 9v6h-4V9L1 2.500z" /></svg>
                  <span>Filters</span>
                  <svg width="14" height="10" viewBox="0 0 14 10" fill="none" stroke={DK} strokeWidth="1.300"><path d="M1 5c2-5 10-5 12 0" /><circle cx="7" cy="5.500" r="1.900" /></svg>
                  <Dbl />
                </FHead>
                <Search><Lens flip />Search</Search>
              </FTop>
              <FSec $mt={9}>
                <FTitle>Filters on this visual<Ell /></FTitle>
                <CardField $h={62}><div>antigen_code</div><div>is (All)</div></CardField>
                <Card $h={46}>Add data fields here</Card>
              </FSec>
              <FSec $mt={19}><FTitle>Filters on this page<Ell /></FTitle><Card $h={46}>Add data fields here</Card></FSec>
              <FSec $mt={19}><FTitle>Filters on all pages<Ell /></FTitle><Card $h={46}>Add data fields here</Card></FSec>
            </Filters>
          </Upper>
          <PageBar>
            <Device $w={43}><svg width="20" height="18" viewBox="0 0 20 18" fill="none" stroke="#484644" strokeWidth="1.300"><path d="M1 2.500h18v11.500H1zM10 14v2M6.500 16h7" /></svg><i /></Device>
            <Device $w={45}><svg width="14" height="21" viewBox="0 0 14 21" fill="none" stroke="#484644" strokeWidth="1.300"><rect x="1" y="1" width="12" height="19" rx="1.500" /><path d="M6 17.500h2.500" /></svg></Device>
            <Arrows><svg width="5" height="8" viewBox="0 0 5 8" fill="#c8c6c4"><path d="M5 0v8L0 4z" /></svg><svg width="5" height="8" viewBox="0 0 5 8" fill="#c8c6c4"><path d="M0 0v8l5-4z" /></svg></Arrows>
            <PageTab>Page 1</PageTab>
            <AddPage><svg width="11" height="11" viewBox="0 0 11 11" stroke="#fff" strokeWidth="3"><path d="M5.500 0v11M0 5.500h11" /></svg></AddPage>
          </PageBar>
        </Center>

        <Viz>
          <VHead><span>Visualizations</span><Dbl /></VHead>
          <Sub>Build visual</Sub>
          <Modes>
            <Mode $on><svg width="24" height="26" viewBox="0 0 24 26" fill={GREEN} stroke="#252423"><path d="M0 1.500h19.500" strokeWidth="1.200" /><path d="M.5 5.500h23v8H.5zM.5 16.500h23v8H.5z" strokeDasharray="1.500 1" /></svg></Mode>
            <Mode $ml={35}><svg width="24" height="26" viewBox="0 0 24 26" fill="none" stroke="#605e5c" strokeWidth="1.500"><path d="M2 20V10.500h5V3h7v8M7 10v11M14 8h5v2" /><path d="M22.500 9.500L15 17l-2-1.500zM13 16c-4 0-3 4-7.500 6 4 2.500 9 1.500 9.500-4.500" fill="#fff" stroke={DK} strokeWidth="1.200" /></svg></Mode>
            <Mode $ml={33}><svg width="26" height="26" viewBox="0 0 26 26" fill="none" stroke={DK} strokeWidth="1.300"><circle cx="11.500" cy="11" r="9.500" /><path d="M2 13l5-4 4 3 9-6.500M7.500 13v6M11.500 15v5M15.500 12v7" /><path d="M18.500 18.500l6 6" strokeWidth="2.500" /></svg></Mode>
          </Modes>
          <svg width="180" height="13" viewBox="0 0 180 13" fill="none" stroke="#8a8886"><path d="M0 12.500h16l8-7.500 8 7.500h148" /></svg>
          <Grid>
            {gallery.map((g, i) => (
              <Cell key={i} $on={i === 26}><svg width="20" height="20" viewBox="0 0 20 20" fill="none" stroke={DK} strokeWidth="1">{g}</svg></Cell>
            ))}
          </Grid>
          <Dots><i /><i /><i /></Dots>
          <Field $h={30} $pt={4}>Field</Field>
          <Well $h={37}>
            <Chip><span>antigen_code</span>
              <svg width="12" height="12" viewBox="0 0 12 12" fill="none" stroke="#b5651d"><path d="M.5 3.500L6 9l5.500-5.500" /></svg>
              <svg width="10" height="10" viewBox="0 0 10 10" fill="none" stroke={DK}><path d="M1 1l8 8M9 1L1 9" /></svg>
            </Chip>
          </Well>
          <Field $h={31} $mt={3} $bold>Drill through</Field>
          <Field $h={20}>Cross-report<Toggle><i />Off</Toggle></Field>
          <Field $h={34}>Keep all filters<Toggle $on><i />On</Toggle></Field>
          <DropHint $h={27}>Add drill-through fields here</DropHint>
        </Viz>

        <Data>
          <DHead><span>Data</span><Dbl /></DHead>
          <DSearch><Lens />Search</DSearch>
          <Tree>
            {tree.map(t => (
              <React.Fragment key={t.n}>
                <TableRow>
                  <TreeChev open={t.open} /><TableIcon /><span>{t.n}</span>
                  {t.mark && <Mark><svg width="12" height="12" viewBox="0 0 12 12"><circle cx="6" cy="6" r="6" fill={GREEN} /><path d="M3.500 6l2 2 3-3.500" stroke="#fff" fill="none" strokeWidth="1.300" /></svg></Mark>}
                </TableRow>
                {t.cols.map(c => (
                  <ColRow key={c.n}>
                    <Box $on={c.on}>{c.on && <svg width="10" height="10" viewBox="0 0 10 10"><path d="M2 5l2.200 2.500L8.500 2.500" stroke="#fff" fill="none" strokeWidth="1.300" /></svg>}</Box>
                    <Sig>{c.s && <Sigma />}</Sig>{c.n}
                  </ColRow>
                ))}
              </React.Fragment>
            ))}
          </Tree>
        </Data>
      </Body>

      <Status>
        <PageNo>Page 1 of 1</PageNo>
        <svg width="126" height="12" viewBox="1139 675 126 12" fill="none" stroke="#605e5c"><path d="M1140 683.500h5" strokeWidth="2" /><path d="M1149 682.500h102M1200.500 680v5" /><path d="M1177 677v9" strokeWidth="3" /><path d="M1255 682.500h8M1259 679v8" /></svg>
        <Pct>60%</Pct>
        <svg width="17" height="12" viewBox="0 0 17 12" fill="none" stroke="#605e5c"><path d="M.5 7V2.500h4M12 2.500h4V7M4.500 12V6.500h8V12" /></svg>
      </Status>
    </App_>
  );
}
